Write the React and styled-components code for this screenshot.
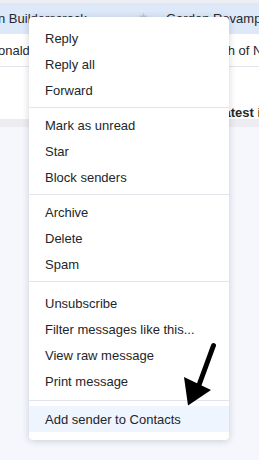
import React from "react";
import styled, { createGlobalStyle } from "styled-components";

const GlobalStyle = createGlobalStyle`
	html, body {
		margin: 0;
		padding: 0;
		background: #f6f7fd;
		font-family: "Liberation Sans", Arial, sans-serif;
		overflow: hidden;
	}
`;

const Page = styled.div`
	position: relative;
	width: 259px;
	height: 460px;
	overflow: hidden;
	background: #f6f7fd;
`;

const TopStrip = styled.div`
	height: 3px;
	background: #eceef3;
`;

const MessageRow = styled.div`
	display: flex;
	align-items: ${p => (p.$bottom ? "flex-end" : "center")};
	height: ${p => p.$height}px;
	background: ${p => (p.$selected ? "#dde9f9" : "#ffffff")};
	border-bottom: ${p => (p.$divider ? "1px solid #e3e5ea" : "none")};
	font-size: 13px;
	color: #26282b;
	white-space: nowrap;
	overflow: hidden;
`;

const Sender = styled.span`
	width: 140px;
	flex-shrink: 0;
	margin-left: -2px;
`;

const StarCell = styled.span`
	width: 28px;
	flex-shrink: 0;
	color: #c3c8d1;
	font-size: 12px;
	margin-top: -4px;
`;

const Subject = styled.span`
	font-weight: ${p => (p.$bold ? 700 : 400)};
	line-height: 13px;
	margin-left: ${p => p.$indent || 0}px;
`;

const FooterBand = styled.div`
	height: 8px;
	background: #ececf1;
`;

const Menu = styled.ul`
	position: absolute;
	left: 29px;
	top: 17px;
	width: 200px;
	margin: 0;
	padding: 8px 0;
	list-style: none;
	background: #ffffff;
	border-radius: 4px;
	box-shadow: 0 1px 7px rgba(30, 35, 60, 0.2);
`;

const Item = styled.li`
	height: 26px;
	display: flex;
	align-items: center;
	padding-left: 16px;
	font-size: 13px;
	color: #232629;
	background: ${p => (p.$active ? "#eef5fe" : "transparent")};
	cursor: pointer;
`;

const Separator = styled.li`
	height: 1px;
	background: #e2e4e9;
	margin: ${p => p.$top || 4}px 0 ${p => p.$bottom || 4}px;
`;

const Arrow = styled.svg`
	position: absolute;
	left: 180px;
	top: 340px;
	width: 40px;
	height: 70px;
	pointer-events: none;
`;

const groups = [
	["Reply", "Reply all", "Forward"],
	["Mark as unread", "Star", "Block senders"],
	["Archive", "Delete", "Spam"],
	["Unsubscribe", "Filter messages like this...", "View raw message", "Print message"],
	["Add sender to Contacts"],
];

const separators = [{}, {}, { bottom: 8 }, { top: 6, bottom: 5 }];

const App = () => {
	return (
		<>
			<GlobalStyle />
			<Page>
				<TopStrip />
				<MessageRow $selected $height={31}>
					<Sender>n Builderscrack</Sender>
					<StarCell>★</StarCell>
					<Subject>Garden Revamp</Subject>
				</MessageRow>
				<MessageRow $height={32} $divider>
					<Sender>onald Crowther</Sender>
					<StarCell>☆</StarCell>
					<Subject>Your growth of New Zealand</Subject>
				</MessageRow>
				<MessageRow $height={52} $bottom>
					<Sender />
					<StarCell />
					<Subject $bold $indent={-6}>Read our latest issue</Subject>
				</MessageRow>
				<FooterBand />

				<Menu>
					{groups.map((group, gi) => (
						<React.Fragment key={gi}>
							{group.map(label => (
								<Item key={label} $active={label === "Add sender to Contacts"}>
									{label}
								</Item>
							))}
							{gi < separators.length && (
								<Separator $top={separators[gi].top} $bottom={separators[gi].bottom} />
							)}
						</React.Fragment>
					))}
				</Menu>

				<Arrow viewBox="180 340 40 70">
					<line x1="213.5" y1="345.5" x2="199" y2="385" stroke="#000" strokeWidth="5" strokeLinecap="round" />
					<polygon points="184,377 211,390 188,405.5" fill="#000" />
				</Arrow>
			</Page>
		</>
	);
};

export default App;
